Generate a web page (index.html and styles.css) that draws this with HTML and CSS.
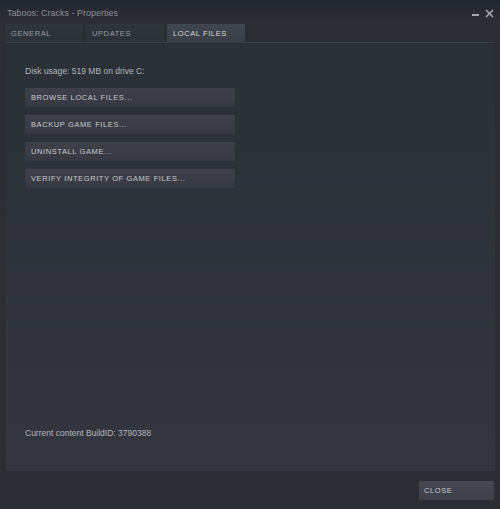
FILE: index.html
```html
<!DOCTYPE html>
<html>
<head>
<meta charset="utf-8">
<link rel="stylesheet" href="styles.css">
</head>
<body>
<div class="window">
  <div class="titlebar">
    <span class="title">Taboos: Cracks - Properties</span>
    <div class="controls">
      <svg class="min" width="8" height="8" viewBox="0 0 8 8"><rect x="0" y="5" width="7" height="2" fill="#a4a8ae"/></svg>
      <svg class="close" width="9" height="9" viewBox="0 0 9 9"><path d="M1 1 L8 8 M8 1 L1 8" stroke="#a4a8ae" stroke-width="1.6"/></svg>
    </div>
  </div>
  <div class="tabs">
    <div class="tab">GENERAL</div>
    <div class="tab">UPDATES</div>
    <div class="tab active">LOCAL FILES</div>
  </div>
  <div class="tabline"></div>
  <div class="panel">
    <div class="disk">Disk usage: 519 MB on drive C:</div>
    <div class="buttons">
      <div class="btn">BROWSE LOCAL FILES...</div>
      <div class="btn">BACKUP GAME FILES...</div>
      <div class="btn">UNINSTALL GAME...</div>
      <div class="btn">VERIFY INTEGRITY OF GAME FILES...</div>
    </div>
    <div class="spacer"></div>
    <div class="build">Current content BuildID: 3790388</div>
  </div>
  <div class="footer">
    <div class="btn closebtn">CLOSE</div>
  </div>
</div>
</body>
</html>
```
FILE: styles.css
```css
html, body {
  margin: 0;
  padding: 0;
  background: #2a2d33;
  font-family: "Liberation Sans", Arial, sans-serif;
}
.window {
  width: 500px;
  height: 509px;
  display: flex;
  flex-direction: column;
  background: linear-gradient(#22262e 0px, #2a2d33 20px, #2a2d33 100%);
}
.titlebar {
  height: 24px;
  display: flex;
  align-items: center;
  justify-content: space-between;
  padding: 0 6px 0 7px;
  box-sizing: border-box;
}
.title {
  color: #8b8f95;
  font-size: 9px;
  margin-top: 2px;
}
.controls {
  display: flex;
  align-items: center;
  gap: 5px;
  margin-top: 2px;
}
.tabs {
  display: flex;
  gap: 3px;
  padding-left: 5px;
  height: 18px;
}
.tab {
  width: 78px;
  height: 18px;
  box-sizing: border-box;
  padding-left: 6px;
  display: flex;
  align-items: center;
  font-size: 7.5px;
  letter-spacing: 0.6px;
  color: #9a9ea4;
  background: linear-gradient(#30343b, #2c3037);
}
.tab.active {
  color: #d6d8db;
  background: linear-gradient(#41454d, #3a3e46);
}
.tabline {
  height: 1px;
  margin: 0 5px;
  background: #3a3e46;
}
.panel {
  margin: 1px 5px 0 6px;
  height: 427px;
  background: linear-gradient(#2b2f36, #33363e);
  padding: 22px 0 0 19px;
  box-sizing: border-box;
  display: flex;
  flex-direction: column;
}
.disk {
  color: #b4b7bc;
  font-size: 8.5px;
}
.buttons {
  display: flex;
  flex-direction: column;
  gap: 8px;
  margin-top: 12px;
}
.btn {
  width: 210px;
  height: 19px;
  box-sizing: border-box;
  padding-left: 6px;
  display: flex;
  align-items: center;
  font-size: 7.5px;
  letter-spacing: 0.6px;
  color: #c8cbcf;
  background: linear-gradient(#3e414a, #363941);
}
.spacer {
  flex: 1;
}
.build {
  color: #b4b7bc;
  font-size: 8.5px;
  margin-bottom: 33px;
}
.footer {
  display: flex;
  justify-content: flex-end;
  padding: 10px 6px 0 0;
}
.closebtn {
  width: 75px;
  height: 19px;
  padding-left: 5px;
  background: linear-gradient(#454850, #3d4048);
}
```
